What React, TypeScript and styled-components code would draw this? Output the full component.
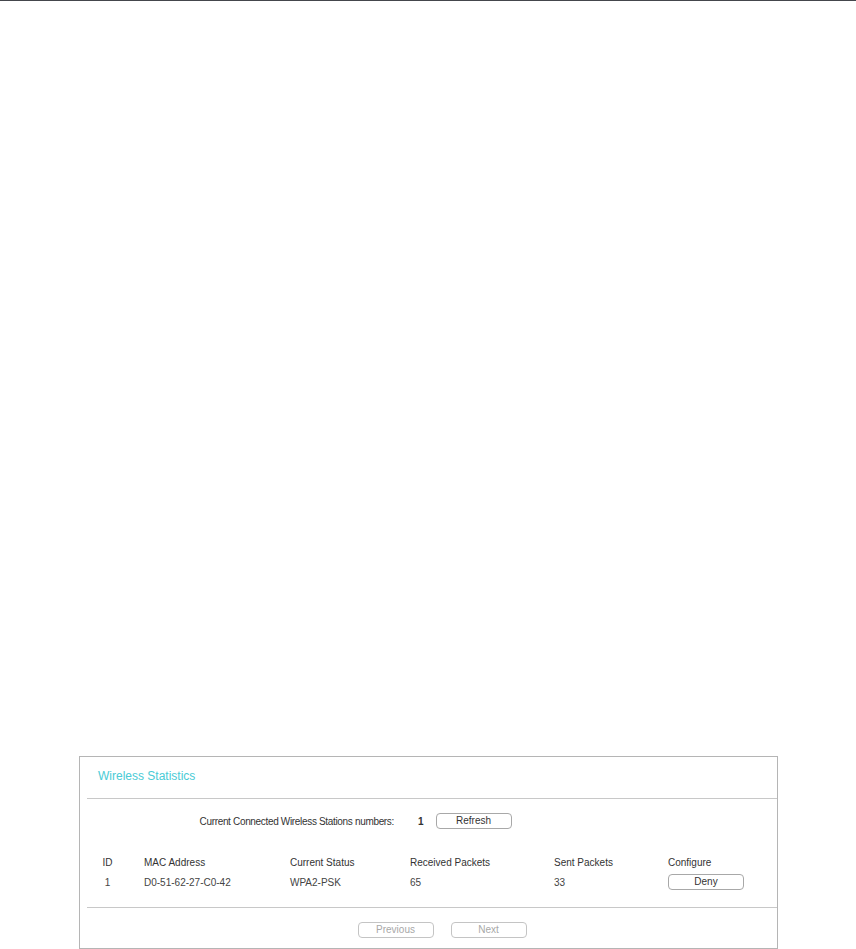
import { FC } from 'react'
import styled, { createGlobalStyle } from 'styled-components'

const GlobalStyle = createGlobalStyle`
  html, body {
    margin: 0;
    padding: 0;
    background: #fff;
    font-family: 'Liberation Sans', Arial, sans-serif;
    color: #333;
  }
`

const stations = [
  { id: 1, mac: 'D0-51-62-27-C0-42', status: 'WPA2-PSK', received: 65, sent: 33 }
]

const App: FC = () => {
  return (
    <>
      <GlobalStyle />
      <TopRule />
      <Page>
        <Panel>
          <PanelHeader>
            <Title>Wireless Statistics</Title>
          </PanelHeader>

          <PanelBody>
            <StationsRow>
              <StationsLabel>Current Connected Wireless Stations numbers:</StationsLabel>
              <StationsCount>{stations.length}</StationsCount>
              <Button>Refresh</Button>
            </StationsRow>

            <Table>
              <HeadCell $id>ID</HeadCell>
              <HeadCell>MAC Address</HeadCell>
              <HeadCell>Current Status</HeadCell>
              <HeadCell>Received Packets</HeadCell>
              <HeadCell>Sent Packets</HeadCell>
              <HeadCell>Configure</HeadCell>

              {stations.map((s) => (
                <Row key={s.id}>
                  <Cell $id>{s.id}</Cell>
                  <Cell>{s.mac}</Cell>
                  <Cell>{s.status}</Cell>
                  <Cell>{s.received}</Cell>
                  <Cell>{s.sent}</Cell>
                  <Cell>
                    <Button>Deny</Button>
                  </Cell>
                </Row>
              ))}
            </Table>
          </PanelBody>

          <PanelFooter>
            <Button disabled>Previous</Button>
            <Button disabled>Next</Button>
          </PanelFooter>
        </Panel>
      </Page>
    </>
  )
}

const TopRule = styled.div`
  height: 1px;
  background: #44464c;
`

const Page = styled.div`
  padding: 755px 0 0 79px;
  height: 949px;
  box-sizing: border-box;
`

const Panel = styled.div`
  width: 699px;
  border: 1px solid #b5b5b5;
  box-sizing: border-box;
`

const PanelHeader = styled.div`
  height: 42px;
  margin-left: 7px;
  border-bottom: 1px solid #c8c8c8;
  box-sizing: border-box;
  display: flex;
  align-items: center;
  padding-left: 11px;
`

const Title = styled.h2`
  margin: 0;
  font-size: 12px;
  font-weight: normal;
  color: #4acbd6;
  line-height: 14px;
  padding-bottom: 4px;
`

const PanelBody = styled.div`
  margin-left: 7px;
  padding: 14px 0 17px;
  border-bottom: 1px solid #c8c8c8;
`

const StationsRow = styled.div`
  display: flex;
  align-items: center;
  height: 16px;
`

const StationsLabel = styled.span`
  width: 307px;
  text-align: right;
  font-size: 10px;
  letter-spacing: -0.33px;
`

const StationsCount = styled.span`
  margin: 0 12px 0 24px;
  font-size: 10px;
  font-weight: bold;
`

const Table = styled.div`
  display: grid;
  grid-template-columns: 42px 146px 120px 144px 114px 1fr;
  grid-auto-rows: 16px;
  row-gap: 4px;
  margin-top: 25px;
  padding-left: 15px;
  font-size: 10px;
`

const Row = styled.div`
  display: contents;
`

const HeadCell = styled.div<{ $id?: boolean }>`
  display: flex;
  align-items: center;
  justify-content: ${(p) => (p.$id ? 'center' : 'flex-start')};
  width: ${(p) => (p.$id ? '11px' : 'auto')};
  font-size: 10px;
  color: #333;
`

const Cell = styled(HeadCell)`
  color: #444;
`

const Button = styled.button`
  width: 76px;
  height: 16px;
  padding: 0;
  border: 1px solid #a8a8a8;
  border-radius: 4px;
  background: #fff;
  font-family: 'Liberation Sans', Arial, sans-serif;
  font-size: 10px;
  color: #333;
  line-height: 14px;
  cursor: pointer;

  &:disabled {
    border-color: #c4c4c4;
    color: #a8a8a8;
    cursor: default;
  }
`

const PanelFooter = styled.div`
  display: flex;
  justify-content: center;
  gap: 17px;
  padding: 14px 0 10px 20px;
  margin-left: 7px;
`

export default App
